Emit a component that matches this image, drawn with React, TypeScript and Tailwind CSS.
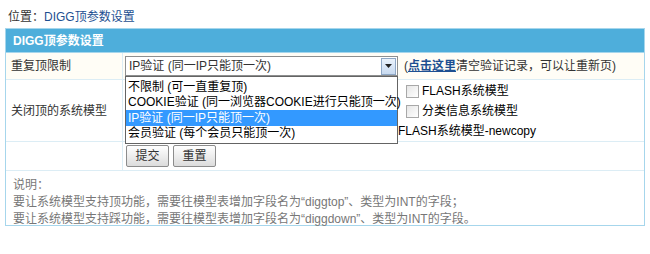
import * as React from "react";

const font = { fontFamily: '"Liberation Sans", "Noto Sans CJK SC", sans-serif' };

const Check = () => (
  <span className="inline-block w-[13px] h-[13px] border border-[#a8a8a8] bg-gradient-to-br from-[#e6e6e6] to-white mr-[3px] shrink-0" />
);

const options = [
  "不限制 (可一直重复顶)",
  "COOKIE验证 (同一浏览器COOKIE进行只能顶一次)",
  "IP验证 (同一IP只能顶一次)",
  "会员验证 (每个会员只能顶一次)",
];

const App = () => {
  return (
    <div className="w-[650px] h-[254px] bg-white text-[12px] text-[#333] leading-none" style={font}>
      <div className="h-[28px] pl-[8px] pt-[11px]">
        位置：<span className="text-[#1d4f91]">DIGG顶参数设置</span>
      </div>
      <div className="ml-[5px] w-[640px] border border-[#a6d6ec]">
        <div className="h-[24px] bg-[#4eaedb] text-white font-bold flex items-center pl-[7px] border-b border-[#a6d6ec]">
          DIGG顶参数设置
        </div>
        {/* 重复顶限制 */}
        <div className="grid grid-cols-[117px_1fr] h-[27px] border-b border-[#dcedf5] bg-[#fffdf6]">
          <div className="flex items-center pl-[5px] border-r border-[#dcedf5]">重复顶限制</div>
          <div className="flex items-center pl-[2px]">
            <div className="relative w-[273px] h-[20px] border border-[#8e8f8f] bg-white flex items-center">
              <span className="pl-[3px] flex-1 whitespace-nowrap">IP验证 (同一IP只能顶一次)</span>
              <span className="w-[15px] h-[17px] mr-[1px] border border-[#8fa8c6] bg-gradient-to-b from-[#eaf2fb] to-[#c8daf0] flex items-center justify-center">
                <svg width="7" height="4" viewBox="0 0 7 4"><path d="M0 0h7L3.5 4z" fill="#222" /></svg>
              </span>
              <div className="absolute left-[-1px] top-[19px] w-[273px] z-10 border border-[#646464] bg-white py-[2px]">
                {options.map((o, i) => (
                  <div
                    key={i}
                    className={
                      i === 2
                        ? "h-[15.5px] flex items-center pl-[2px] whitespace-nowrap bg-[#3399ff] text-white"
                        : "h-[15.5px] flex items-center pl-[2px] whitespace-nowrap text-black"
                    }
                  >
                    {o}
                  </div>
                ))}
              </div>
            </div>
            <span className="ml-[6px] whitespace-nowrap">
              (<a className="text-[#1d4f91] font-bold underline">点击这里</a>清空验证记录，可以让重新页)
            </span>
          </div>
        </div>
        {/* 关闭顶的系统模型 */}
        <div className="grid grid-cols-[117px_1fr] h-[62px] border-b border-[#dcedf5]">
          <div className="flex items-center pl-[5px] border-r border-[#dcedf5]">关闭顶的系统模型</div>
          <div className="flex flex-col justify-center gap-[7px] pl-[283px] text-black">
            <div className="flex items-center">
              <Check />
              FLASH系统模型
            </div>
            <div className="flex items-center">
              <Check />
              分类信息系统模型
            </div>
            <div className="flex items-center ml-[-8px]">FLASH系统模型-newcopy</div>
          </div>
        </div>
        {/* buttons */}
        <div className="grid grid-cols-[117px_1fr] h-[29px] border-b border-[#dcedf5]">
          <div className="border-r border-[#dcedf5]" />
          <div className="flex items-center gap-[4px] pl-[3px]">
            <button className="w-[43px] h-[22px] border border-[#8c8c8c] rounded-[2px] bg-gradient-to-b from-white to-[#dcdcdc] text-[12px] text-[#333]">
              提交
            </button>
            <button className="w-[43px] h-[22px] border border-[#8c8c8c] rounded-[2px] bg-gradient-to-b from-white to-[#dcdcdc] text-[12px] text-[#333]">
              重置
            </button>
          </div>
        </div>
        {/* notes */}
        <div className="h-[54px] pl-[7px] pt-[8px] text-[#777] flex flex-col gap-[5px]">
          <div>说明：</div>
          <div>要让系统模型支持顶功能，需要往模型表增加字段名为“diggtop”、类型为INT的字段；</div>
          <div>要让系统模型支持踩功能，需要往模型表增加字段名为“diggdown”、类型为INT的字段。</div>
        </div>
      </div>
    </div>
  );
};

export default App;
